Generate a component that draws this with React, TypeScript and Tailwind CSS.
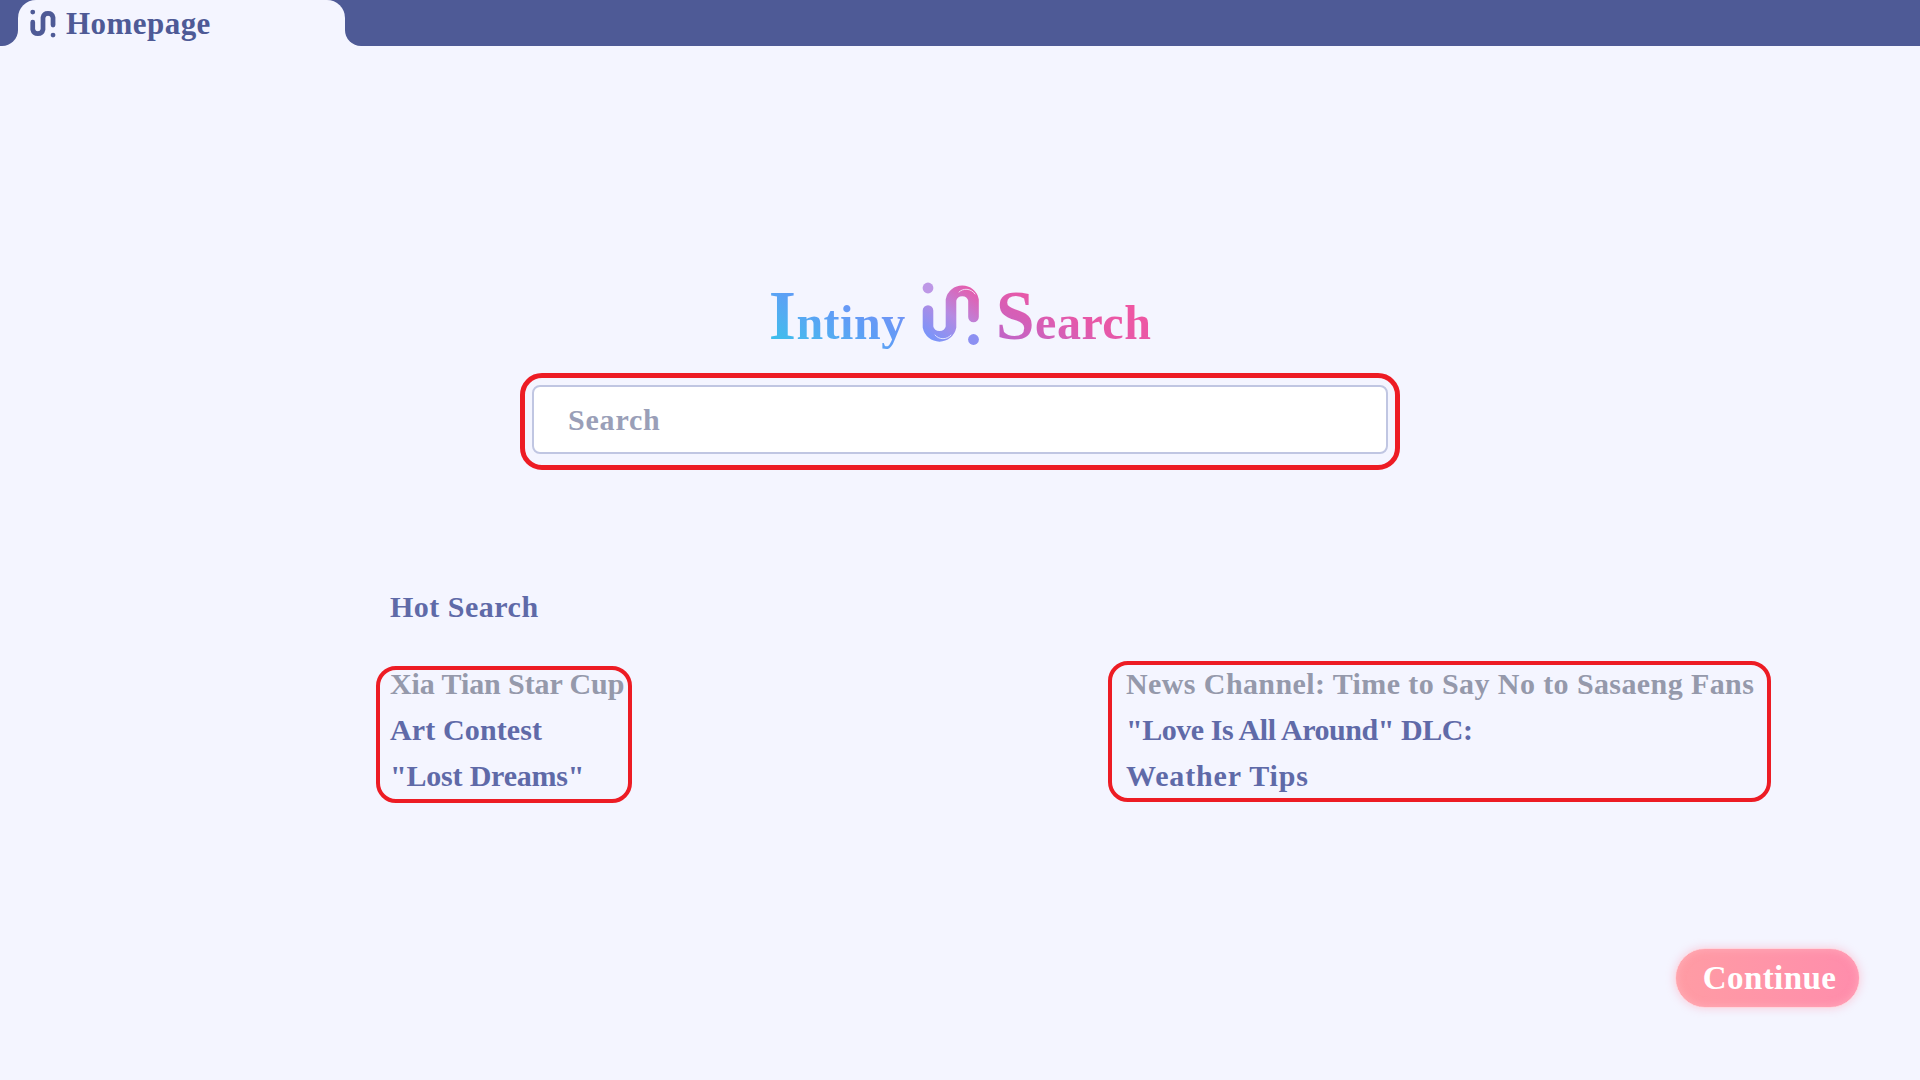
import React from "react";

const serif = "font-['Liberation_Serif','Times_New_Roman',serif]";

function LogoMark({ className, color }: { className: string; color?: string }) {
  const main = color ?? "url(#logoStroke)";
  return (
    <svg viewBox="16 8 58 65" className={className} fill="none">
      <defs>
        <linearGradient id="logoStroke" gradientUnits="userSpaceOnUse" x1="25" y1="70" x2="65" y2="14">
          <stop offset="0" stopColor="#7396fc" />
          <stop offset="0.5" stopColor="#b58ae2" />
          <stop offset="1" stopColor="#e75bab" />
        </linearGradient>
      </defs>
      <circle cx="22" cy="15" r="5.4" fill={color ?? "#bd97e6"} />
      <circle cx="67.5" cy="66.5" r="5.4" fill={color ?? "#8c90f2"} />
      <path
        d="M22 37.5V54A11.75 11.75 0 0 0 45 54V27A11.5 11.5 0 0 1 67.5 27V44"
        stroke={main}
        strokeWidth="10.6"
        strokeLinecap="round"
      />
      {!color && (
        <g stroke="#f5f6ff" strokeWidth="0.8" fill="none" strokeLinecap="round">
          <path d="M29 62C33 67 41 67 45 62" />
          <path d="M53 19C57 15 65 15 69 21" />
        </g>
      )}
    </svg>
  );
}

function HotItem({ label, muted, className }: { label: string; muted?: boolean; className: string }) {
  return (
    <div className={`h-[46px] leading-[46px] whitespace-nowrap text-[30px] font-bold ${className} ${muted ? "text-[#9599ab]" : "text-[#5f6aa8]"}`}>
      {label}
    </div>
  );
}

export default function App() {
  return (
    <div className={`w-full h-screen flex flex-col bg-[#f4f5ff] overflow-hidden ${serif}`}>
      {/* tab strip */}
      <div className="flex h-[46px] shrink-0">
        <div className="w-[18px] bg-[#4e5a96] rounded-br-[16px]" />
        <div className="w-[327px] bg-[#4e5a96]">
          <div className="h-full flex items-center pl-[12px] gap-[10px] bg-[#f4f5ff] rounded-t-[18px]">
            <LogoMark className="w-[26px] h-[29px]" color="#4e5a96" />
            <span className="text-[31px] font-bold text-[#4e5a96] leading-none tracking-[0.45px]">Homepage</span>
          </div>
        </div>
        <div className="flex-1 bg-[#4e5a96] rounded-bl-[16px]" />
      </div>

      {/* logo + search */}
      <div className="flex flex-col items-center mt-[224px]">
        <div className="flex items-center h-[91px] mb-[12px]">
          <span className="text-[48px] font-bold leading-none tracking-[0.5px] bg-gradient-to-tr from-[#2cc6e9] via-[#5f9df6] to-[#7f8af5] bg-clip-text text-transparent">
            <span className="text-[70px]">I</span>ntiny
          </span>
          <LogoMark className="w-[58px] h-[65px] ml-[16px] mr-[16px] -mt-[5px]" />
          <span className="text-[48px] font-bold leading-none tracking-[0.5px] bg-gradient-to-tr from-[#b566d0] via-[#e758a8] to-[#f7559c] bg-clip-text text-transparent">
            <span className="text-[70px]">S</span>earch
          </span>
        </div>
        <div className="w-[880px] h-[97px] border-[5px] border-[#ed1c24] rounded-[22px] pt-[7px] px-[7px]">
          <input
            placeholder="Search"
            readOnly
            className="w-full h-[69px] bg-white border-2 border-[#c0c6e2] rounded-[8px] pl-[34px] text-[30px] font-bold tracking-[0.8px] text-[#9a9fb8] placeholder:text-[#9a9fb8] outline-none"
          />
        </div>
      </div>

      {/* hot search */}
      <div className="mt-[113px] pl-[390px] text-[30px] font-bold text-[#5f6aa8] leading-[48px] tracking-[0.5px]">Hot Search</div>
      <div className="flex items-start mt-[30px] pl-[376px]">
        <div className="w-[256px] h-[137px] mt-[5px] border-[4px] border-[#ed1c24] rounded-[20px] pl-[10px] whitespace-nowrap">
          <div className="-mt-[9px]">
            <HotItem label="Xia Tian Star Cup" muted className="tracking-[-0.1px]" />
            <HotItem label="Art Contest" className="tracking-[0.13px]" />
            <HotItem label={'"Lost Dreams"'} className="tracking-[-0.2px]" />
          </div>
        </div>
        <div className="w-[663px] h-[141px] ml-[476px] border-[4px] border-[#ed1c24] rounded-[20px] pl-[14px]">
          <div className="-mt-[4px]">
            <HotItem label="News Channel: Time to Say No to Sasaeng Fans" muted className="tracking-[0.4px]" />
            <HotItem label={'"Love Is All Around" DLC:'} className="tracking-[-0.45px]" />
            <HotItem label="Weather Tips" className="tracking-[0.85px]" />
          </div>
        </div>
      </div>

      {/* continue */}
      <div className="flex justify-end pr-[60px] mt-[145px]">
        <button className="w-[185px] h-[60px] pl-[4px] rounded-full bg-gradient-to-r from-[#ff9ca4] to-[#ff8dac] border border-[#ffd5de] shadow-[0_0_10px_rgba(255,150,170,0.45),inset_0_0_8px_rgba(255,190,200,0.6)] text-[33px] font-bold text-white leading-none tracking-[0.4px]">
          Continue
        </button>
      </div>
    </div>
  );
}
